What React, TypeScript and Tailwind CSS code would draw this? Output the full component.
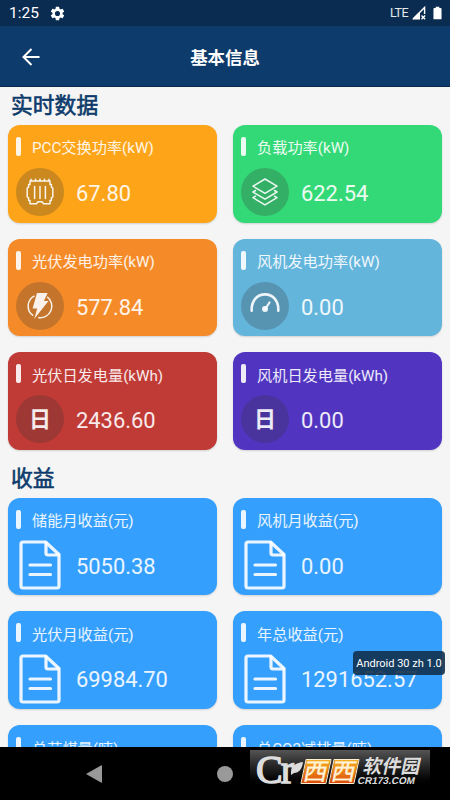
import clsx from 'clsx';
import type { ReactNode } from 'react';

type CardData = {
  label: string;
  value: string;
  color: string;
  icon: ReactNode;
};

function ConverterIcon() {
  return (
    <svg viewBox="0 0 28 28" className="size-7" fill="none" stroke="currentColor" strokeWidth="1.5" strokeLinejoin="round" strokeLinecap="round">
      <path d="M4 3h20v3.6h1.4v2.6l1.4 1v8.6l-1.4 1v2.7H24v3.2h-6.5l-1.5-2h-4l-1.5 2H4v-3.2H2.6v-2.7l-1.4-1v-8.6l1.4-1V6.600H4Z" />
      <path d="M5 2.800V1.300M9.500 2.800V1.300M14 2.800V1.300M18.500 2.800V1.300M23 2.800V1.300" />
      <path d="M8.600 8.500v12M14 8.500v12M19.400 8.500v12" />
    </svg>
  );
}

function LayersIcon() {
  return (
    <svg viewBox="0 0 28 28" className="size-7" fill="none" stroke="currentColor" strokeWidth="1.5" strokeLinejoin="round" strokeLinecap="round">
      <path d="M14 1 26 8.2 14 15.4 2 8.2Z" />
      <path d="M4.5 12.5 2 14 14 21.2 26 14l-2.5-1.500" />
      <path d="M4.5 18.200 2 19.700 14 26.900l12-7.200-2.500-1.500" />
    </svg>
  );
}

function BoltIcon() {
  return (
    <svg viewBox="0 0 28 28" className="size-7" fill="none">
      <path d="M8.5 3.8A11.6 11.6 0 0 0 7.2 23.7M21.200 4.900a11.600 11.600 0 0 1-9 20.700" stroke="currentColor" strokeWidth="1.5" />
      <path d="M11 1h10.600L18 9h4.500L8.2 27l3-10.500H6.600Z" fill="currentColor" />
    </svg>
  );
}

function GaugeIcon() {
  return (
    <svg viewBox="0 0 30 28" className="h-7 w-[30px]" fill="none" stroke="currentColor" strokeLinecap="round">
      <path d="M1.700 18.700C1.200 9 7 2.400 15 2.400S28.800 9 28.300 18.700" strokeWidth="2.6" />
      <path d="m15.500 16.500 4-6" strokeWidth="2.200" />
      <circle cx="15" cy="17" r="3" fill="currentColor" stroke="none" />
    </svg>
  );
}

function DocumentIcon() {
  return (
    <svg viewBox="0 0 42 50" className="mt-px h-[50px] w-[42px]" fill="none" stroke="currentColor" strokeWidth="3.200" strokeLinejoin="round" strokeLinecap="round">
      <path d="M4 2h22.500L40 14.500V46q0 2-2 2H4q-2 0-2-2V4q0-2 2-2Z" />
      <path d="M27 2.500V13q0 2 2 2h10.500" />
      <path d="M11 25h20.500M11 34.500h20.500" />
    </svg>
  );
}

function DayIcon() {
  return <span className="pt-[2px] text-[22px] leading-none font-bold">日</span>;
}

const realtime: CardData[] = [
  { label: 'PCC交换功率(kW)', value: '67.80', color: 'bg-[#fda418]', icon: <ConverterIcon /> },
  { label: '负载功率(kW)', value: '622.54', color: 'bg-[#33d977]', icon: <LayersIcon /> },
  { label: '光伏发电功率(kW)', value: '577.84', color: 'bg-[#f58b28]', icon: <BoltIcon /> },
  { label: '风机发电功率(kW)', value: '0.00', color: 'bg-[#63b5dc]', icon: <GaugeIcon /> },
  { label: '光伏日发电量(kWh)', value: '2436.60', color: 'bg-[#c03a36]', icon: <DayIcon /> },
  { label: '风机日发电量(kWh)', value: '0.00', color: 'bg-[#5135c1]', icon: <DayIcon /> }
];

const income = [
  { label: '储能月收益(元)', value: '5050.38' },
  { label: '风机月收益(元)', value: '0.00' },
  { label: '光伏月收益(元)', value: '69984.70' },
  { label: '年总收益(元)', value: '1291652.57' },
  { label: '总节煤量(吨)', value: '0.00' },
  { label: '总CO2减排量(吨)', value: '0.00' }
];

function Card({ label, value, color, icon, round }: CardData & { round: boolean }) {
  return (
    <div className={clsx('h-[97.7px] rounded-[12px] px-2 pt-3 text-white/90 shadow-[0_1px_2px_rgba(0,0,0,0.15)]', color)}>
      <div className="flex h-[19px] items-center">
        <span className="h-[19px] w-[4.5px] rounded-[2px] bg-white/90" />
        <span className="ml-[11.5px] pt-[5px] text-[15.2px] leading-none whitespace-nowrap">{label}</span>
      </div>
      <div className="mt-3 flex h-12 items-center">
        <div className={clsx('flex size-12 items-center justify-center', round && 'rounded-full bg-[#333]/25')}>{icon}</div>
        <span className="ml-3 pt-[4px] text-[21.9px] leading-none">{value}</span>
      </div>
    </div>
  );
}

function SectionTitle({ children }: { children: ReactNode }) {
  return (
    <h2 className="flex h-[38px] items-center pl-[11px] text-[21.8px] leading-none text-[#0d3b6b] [-webkit-text-stroke:0.6px_#0d3b6b]">
      {children}
    </h2>
  );
}

function StatusBar() {
  return (
    <div className="flex h-[26px] shrink-0 items-center bg-[#0a2c50] pr-2 pl-[9px] text-white">
      <span className="pt-px text-[15.5px] leading-none">1:25</span>
      <svg viewBox="0 0 24 24" className="ml-[10px] size-[17px]" fill="currentColor">
        <path d="M19.14 12.94c.04-.3.06-.61.06-.94 0-.32-.02-.64-.07-.94l2.03-1.58a.49.49 0 0 0 .12-.61l-1.92-3.32a.488.488 0 0 0-.59-.22l-2.39.96c-.5-.38-1.03-.7-1.62-.94l-.36-2.54a.484.484 0 0 0-.48-.41h-3.84c-.24 0-.43.17-.47.41l-.36 2.54c-.59.24-1.13.57-1.62.94l-2.39-.96c-.22-.08-.47 0-.59.22L2.74 8.87c-.12.21-.08.47.12.61l2.03 1.58c-.05.3-.09.63-.09.94s.02.64.07.94l-2.03 1.58a.49.49 0 0 0-.12.61l1.92 3.32c.12.22.37.29.59.22l2.39-.96c.5.38 1.03.7 1.62.94l.36 2.54c.05.24.24.41.48.41h3.84c.24 0 .44-.17.47-.41l.36-2.54c.59-.24 1.13-.56 1.62-.94l2.39.96c.22.08.47 0 .59-.22l1.92-3.32c.12-.22.07-.47-.12-.61l-2.01-1.58ZM12 15.6A3.6 3.6 0 1 1 12 8.4a3.6 3.6 0 0 1 0 7.2Z" />
      </svg>
      <span className="ml-auto text-[12.5px] leading-none tracking-[-0.5px] text-white/90">LTE</span>
      <svg viewBox="0 0 14 14" className="ml-[4px] size-[14px]" fill="none" stroke="currentColor">
        <path d="M1 13 12.6 1.4V8" strokeWidth="1.4" />
        <path d="M.3 13.6 8 5.8v7.8Z" fill="currentColor" stroke="none" />
        <path d="m9.5 9.6 3.6 3.6m0-3.6-3.6 3.6" strokeWidth="1.4" />
      </svg>
      <svg viewBox="0 0 10 14" className="ml-[7px] h-[14px] w-[9px]" fill="currentColor">
        <path d="M3 0h4v1.5h1.5q1 0 1 1V13q0 1-1 1h-7q-1 0-1-1V2.5q0-1 1-1H3Z" />
      </svg>
    </div>
  );
}

function Watermark() {
  return (
    <div className="absolute top-[750px] left-[250px] flex h-10 w-[180px] bg-linear-to-b from-[#555] to-black text-[#ddd]">
      <div className="relative w-[53px] shrink-0">
        <span className="absolute top-0 left-[6px] font-['Liberation_Serif',serif] text-[40px] leading-10 tracking-[-2px] [-webkit-text-stroke:1.4px_#ddd]">Cr</span>
        <svg viewBox="0 0 14 14" className="absolute top-[11px] left-[40px] size-[14px]" fill="currentColor">
          <path d="M1 11C1 4 7 2 13 1c-1 7-4 11-9 11l-3 2Z" />
        </svg>
      </div>
      {['a', 'b'].map((key) => (
        <span
          key={key}
          className="mt-[9px] mr-[2px] flex h-[25px] w-[26px] shrink-0 -skew-x-12 items-center justify-center rounded-[1px] border border-[#fff0d0] bg-linear-to-b from-[#f5ae22] to-[#db4a0c] text-[24px] leading-none text-[#fff3d8] [-webkit-text-stroke:0.4px_#fff3d8]"
        >
          西
        </span>
      ))}
      <div className="ml-[4px] flex -skew-x-12 flex-col whitespace-nowrap">
        <span className="mt-[7px] text-[19px] leading-[19px] font-bold">软件园</span>
        <span className="ml-[-3px] font-['Liberation_Sans',sans-serif] text-[10px] leading-[10px] font-bold">CR173.COM</span>
      </div>
    </div>
  );
}

export default function App() {
  return (
    <div className="relative flex h-[800px] w-[450px] flex-col overflow-hidden bg-[#f5f5f6] font-['Roboto','Noto_Sans_CJK_SC',sans-serif]">
      <StatusBar />
      <header className="grid h-[61px] shrink-0 grid-cols-[60px_1fr_60px] items-center border-b border-[#08294b] bg-[#0d3c6c] text-white">
        <svg viewBox="0 0 18 18" className="mt-[2px] ml-[22px] size-[18px]" fill="none" stroke="currentColor" strokeWidth="2">
          <path d="M17.5 9H1.5M9.5 1 1.5 9l8 8" />
        </svg>
        <h1 className="pt-[6px] text-center text-[17.4px] leading-none font-bold">基本信息</h1>
      </header>

      <main className="h-[660px] shrink-0 overflow-hidden">
        <section>
          <SectionTitle>实时数据</SectionTitle>
          <div className="grid grid-cols-2 gap-4 px-2">
            {realtime.map((item) => (
              <Card key={item.label} {...item} round />
            ))}
          </div>
        </section>
        <section className="pt-[9.7px]">
          <SectionTitle>收益</SectionTitle>
          <div className="grid grid-cols-2 gap-4 px-2">
            {income.map((item) => (
              <Card key={item.label} {...item} color="bg-[#359ffd]" icon={<DocumentIcon />} round={false} />
            ))}
          </div>
        </section>
      </main>

      <nav className="flex h-[53px] shrink-0 items-center bg-black pl-[86px] text-[#999]">
        <svg viewBox="0 0 16 18" className="h-[18px] w-4" fill="currentColor">
          <path d="M0 9 15 .5q1-.5 1 .5v16q0 1-1 .5Z" />
        </svg>
        <span className="ml-[115px] size-4 rounded-full bg-[#999]" />
      </nav>

      <div className="absolute top-[651px] left-[353px] flex h-6 w-[92px] items-center justify-center rounded-[4px] bg-[#12304d]/90 text-[11px] leading-none whitespace-nowrap text-white">
        Android 30 zh 1.0
      </div>
      <Watermark />
    </div>
  );
}
